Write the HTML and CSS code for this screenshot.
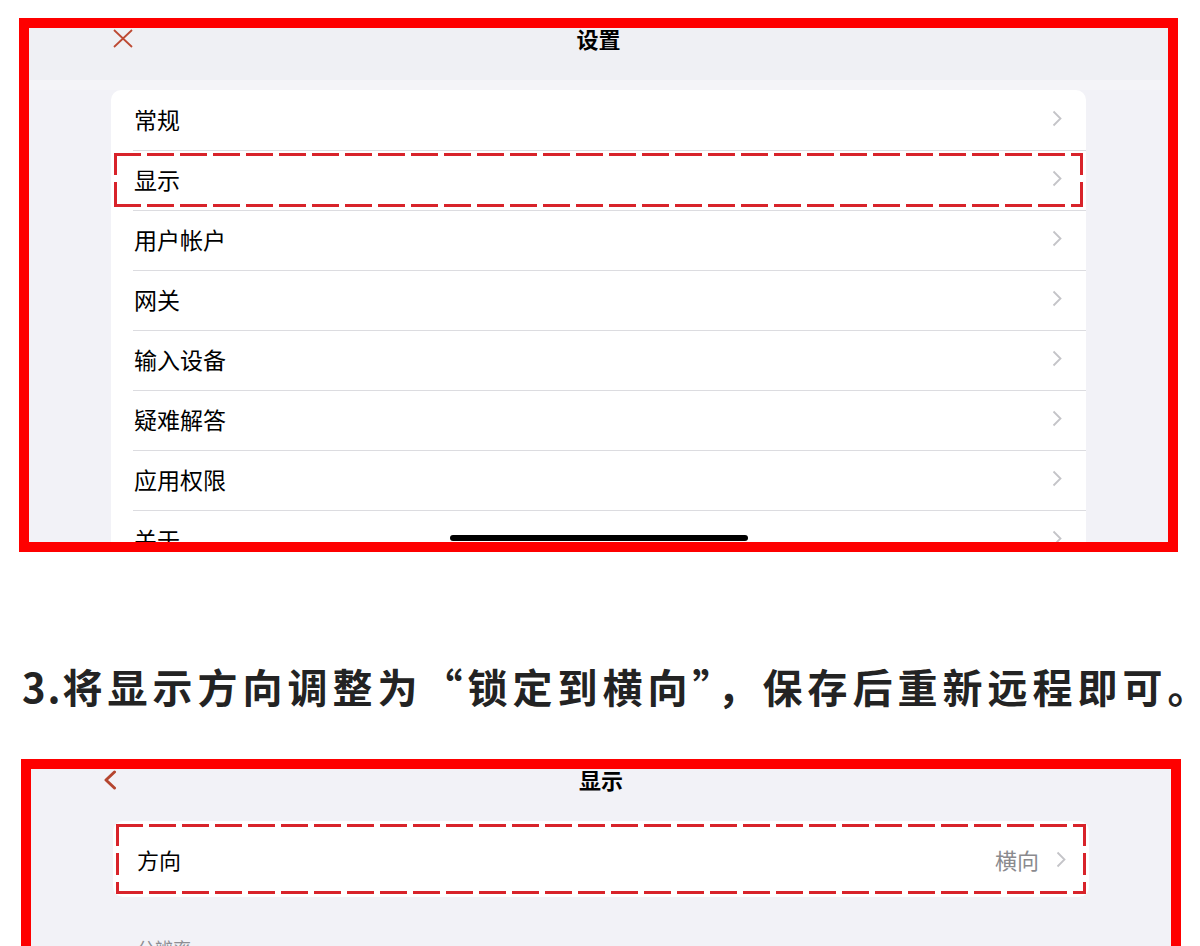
FILE: index.html
```html
<!DOCTYPE html>
<html lang="zh-CN">
<head>
  <meta charset="UTF-8">
  <meta name="viewport" content="width=device-width, initial-scale=1.0">
  <title>远程桌面设置</title>
  <link rel="stylesheet" href="styles.css">
</head>
<body>
  <section class="shot shot-settings">
    <header class="nav">
      <span class="nav-side">
        <svg class="icon-close" width="20" height="19" viewBox="0 0 20 19"><path d="M1 1L19 18M19 1L1 18"/></svg>
      </span>
      <h2 class="nav-title">设置</h2>
      <span class="nav-side"></span>
    </header>
    <ul class="list">
      <li class="row">常规<svg class="chev" width="10" height="17" viewBox="0 0 10 17"><polyline points="1.5,1.5 8.5,8.5 1.5,15.5"/></svg></li>
      <li class="row marked">显示<svg class="chev" width="10" height="17" viewBox="0 0 10 17"><polyline points="1.5,1.5 8.5,8.5 1.5,15.5"/></svg></li>
      <li class="row">用户帐户<svg class="chev" width="10" height="17" viewBox="0 0 10 17"><polyline points="1.5,1.5 8.5,8.5 1.5,15.5"/></svg></li>
      <li class="row">网关<svg class="chev" width="10" height="17" viewBox="0 0 10 17"><polyline points="1.5,1.5 8.5,8.5 1.5,15.5"/></svg></li>
      <li class="row">输入设备<svg class="chev" width="10" height="17" viewBox="0 0 10 17"><polyline points="1.5,1.5 8.5,8.5 1.5,15.5"/></svg></li>
      <li class="row">疑难解答<svg class="chev" width="10" height="17" viewBox="0 0 10 17"><polyline points="1.5,1.5 8.5,8.5 1.5,15.5"/></svg></li>
      <li class="row">应用权限<svg class="chev" width="10" height="17" viewBox="0 0 10 17"><polyline points="1.5,1.5 8.5,8.5 1.5,15.5"/></svg></li>
      <li class="row">关于<svg class="chev" width="10" height="17" viewBox="0 0 10 17"><polyline points="1.5,1.5 8.5,8.5 1.5,15.5"/></svg></li>
    </ul>
    <div class="home-bar"></div>
  </section>

  <h1 class="step"><span class="step-no">3.</span>将显示方向调整为<span class="quote">“</span>锁定到横向<span class="quote">”</span>，保存后重新远程即可。</h1>

  <section class="shot shot-display">
    <header class="nav">
      <span class="nav-side">
        <svg class="icon-back" width="14" height="20" viewBox="0 0 14 20"><polyline points="11.5,2 3,10 11.5,18"/></svg>
      </span>
      <h2 class="nav-title">显示</h2>
      <span class="nav-side"></span>
    </header>
    <ul class="list">
      <li class="row row-tall marked">方向<span class="value">横向</span><svg class="chev" width="10" height="17" viewBox="0 0 10 17"><polyline points="1.5,1.5 8.5,8.5 1.5,15.5"/></svg></li>
    </ul>
    <p class="group-label">分辨率</p>
  </section>
</body>
</html>
```

FILE: styles.css
```css
* { box-sizing: border-box; }
body {
  margin: 0;
  background: #fff;
  font-family: "Noto Sans CJK SC", "Noto Sans", sans-serif;
  color: #000;
  overflow: hidden;
}

/* screenshot frames */
.shot {
  position: relative;
  border: 10px solid #fe0000;
  background: #f2f2f7;
  overflow: hidden;
}
.shot-settings {
  margin: 18px 0 0 19px;
  width: 1159px;
  height: 534px;
}
.shot-display {
  margin: 53px 0 0 21px;
  width: 1160px;
  height: 400px;
}

.nav {
  display: grid;
  grid-template-columns: 1fr auto 1fr;
  height: 62px;
  background: linear-gradient(#eff0f4 0 52px, #f4f4f8 52px);
}
.shot-display .nav {
  height: 52px;
  background: #f2f2f7;
}
.nav-title {
  margin: 0;
  font-size: 22px;
  font-weight: 700;
  line-height: 20px;
}
.nav-side { padding-top: 1px; }
.icon-close {
  margin-left: 84px;
  fill: none;
  stroke: #bd4a33;
  stroke-width: 1.8;
}
.icon-back {
  margin-left: 72px;
  fill: none;
  stroke: #b5452f;
  stroke-width: 3;
  stroke-linecap: round;
  stroke-linejoin: round;
}

/* grouped list */
.list {
  list-style: none;
  margin: 0 82px;
  padding: 0;
  background: #fff;
  border-radius: 10px;
}
.row {
  position: relative;
  display: flex;
  align-items: center;
  height: 60px;
  padding: 0 24px 3px 23px;
  font-size: 23px;
}
.row + .row {
  background: linear-gradient(#dcdce0, #dcdce0) 22px 0 / 100% 1px no-repeat;
}
.row-tall {
  height: 76px;
  padding: 0 23px 0 24px;
  font-size: 22px;
}
.chev {
  margin-left: auto;
  fill: none;
  stroke: #c4c4c8;
  stroke-width: 1.8;
}
.value {
  margin-left: auto;
  margin-right: 17px;
  color: #8a8a8e;
}
.value + .chev { margin-left: 0; }

/* red dashed annotation */
.marked::after {
  content: "";
  position: absolute;
  inset: 3px;
  background:
    repeating-linear-gradient(90deg, #d8232a 0 27px, transparent 27px 33px) top / 100% 3px no-repeat,
    repeating-linear-gradient(90deg, #d8232a 0 27px, transparent 27px 33px) bottom / 100% 3px no-repeat,
    repeating-linear-gradient(180deg, #d8232a 0 22px, transparent 22px 29px) left / 3px 100% no-repeat,
    repeating-linear-gradient(180deg, #d8232a 0 22px, transparent 22px 29px) right / 3px 100% no-repeat;
}

.home-bar {
  position: absolute;
  left: 50%;
  bottom: 1px;
  width: 298px;
  height: 6px;
  margin-left: -149px;
  border-radius: 3px;
  background: #000;
}

.group-label {
  margin: 38px 0 0 106px;
  font-size: 18px;
  color: #8e8e93;
}

/* instruction text */
.step {
  margin: 114px 0 0 22px;
  font-size: 40px;
  line-height: 40px;
  font-weight: 700;
  letter-spacing: 5px;
  white-space: nowrap;
  color: #232323;
}
.step-no { letter-spacing: 2px; }
.quote { font-feature-settings: "fwid"; }
```
